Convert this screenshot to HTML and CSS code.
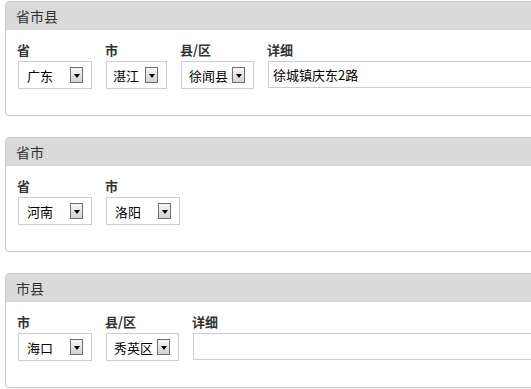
FILE: index.html
```html
<!DOCTYPE html>
<html lang="zh-CN">
<head>
    <meta charset="UTF-8">
    <meta name="viewport" content="width=device-width, initial-scale=1.0">
    <title>省市县联动</title>
    <link rel="stylesheet" href="styles.css">
</head>
<body>
    <div class="panel">
        <div class="panel-heading">省市县</div>
        <div class="panel-body">
            <div class="field">
                <label>省</label>
                <div class="select"><span>广东</span><i class="caret"></i></div>
            </div>
            <div class="field">
                <label>市</label>
                <div class="select narrow"><span>湛江</span><i class="caret"></i></div>
            </div>
            <div class="field">
                <label>县/区</label>
                <div class="select county"><span>徐闻县</span><i class="caret"></i></div>
            </div>
            <div class="field">
                <label>详细</label>
                <input class="detail" type="text" value="徐城镇庆东2路">
            </div>
        </div>
    </div>

    <div class="panel">
        <div class="panel-heading">省市</div>
        <div class="panel-body">
            <div class="field">
                <label>省</label>
                <div class="select"><span>河南</span><i class="caret"></i></div>
            </div>
            <div class="field">
                <label>市</label>
                <div class="select"><span>洛阳</span><i class="caret"></i></div>
            </div>
        </div>
    </div>

    <div class="panel">
        <div class="panel-heading">市县</div>
        <div class="panel-body">
            <div class="field">
                <label>市</label>
                <div class="select"><span>海口</span><i class="caret"></i></div>
            </div>
            <div class="field">
                <label>县/区</label>
                <div class="select county"><span>秀英区</span><i class="caret"></i></div>
            </div>
            <div class="field">
                <label>详细</label>
                <input class="detail" type="text" value="">
            </div>
        </div>
    </div>
</body>
</html>
```

FILE: styles.css
```css
html, body { overflow: hidden; }
body { margin: 1px 0 0 5px; font-family: "Noto Sans CJK SC", "Noto Sans", sans-serif; color: #333; }

.panel { width: 640px; border: 1px solid #c9c9c9; border-radius: 4px; margin-bottom: 21px; background: #fff; }
.panel-heading { height: 28px; line-height: 28px; padding-left: 10px; font-size: 14px; color: #333; background: #dadada; border-radius: 3px 3px 0 0; }
.panel-body { display: flex; gap: 14px; padding: 11px 12px 26px; }

.field { display: flex; flex-direction: column; gap: 2px; }
.field label { font-size: 13px; font-weight: bold; line-height: 18px; color: #333; margin-left: -1px; }

.select { display: flex; align-items: center; justify-content: space-between; box-sizing: border-box; width: 74px; height: 28px; padding: 0 8px; border: 1px solid #cfcfcf; font-size: 13px; color: #000; }
.select.narrow { width: 61px; padding-left: 6px; }
.select.county { width: 73px; padding: 0 8px 0 7px; }
.caret { display: flex; align-items: center; justify-content: center; box-sizing: border-box; width: 13px; height: 16px; border: 1px solid #6f6f6f; background: linear-gradient(#f6f6f6, #d2d2d2); }
.caret::after { content: ""; border-left: 3.5px solid transparent; border-right: 3.5px solid transparent; border-top: 4px solid #000; margin-top: 2px; }

.detail { box-sizing: border-box; width: 400px; height: 27px; padding: 0 4px; border: 1px solid #cfcfcf; font-family: inherit; font-size: 13px; color: #000; outline: none; }
```
